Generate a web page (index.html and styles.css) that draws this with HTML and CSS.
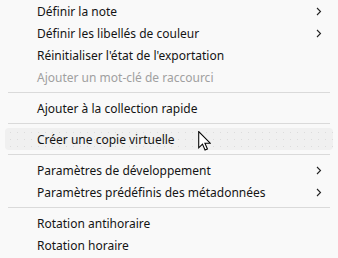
FILE: index.html
```html
<!DOCTYPE html>
<html lang="fr">
<head>
  <meta charset="UTF-8">
  <title>Menu contextuel</title>
  <link rel="stylesheet" href="styles.css">
</head>
<body>
  <div class="menu">
    <div class="item"><span>Définir la note</span><svg class="chev" viewBox="0 0 6 9"><path d="M1 1l3.5 3.5L1 8"/></svg></div>
    <div class="item"><span>Définir les libellés de couleur</span><svg class="chev" viewBox="0 0 6 9"><path d="M1 1l3.5 3.5L1 8"/></svg></div>
    <div class="item"><span>Réinitialiser l'état de l'exportation</span></div>
    <div class="item disabled"><span>Ajouter un mot-clé de raccourci</span></div>
    <div class="sep"></div>
    <div class="item"><span>Ajouter à la collection rapide</span></div>
    <div class="sep"></div>
    <div class="item hover"><span>Créer une copie virtuelle</span>
      <svg class="cursor" viewBox="0 0 12 19"><path d="M0.5 0.5v15.5l3.6-3.5 2.4 5.6 2.3-1-2.4-5.5h5z" fill="#fff" stroke="#000" stroke-width="1"/></svg>
    </div>
    <div class="sep"></div>
    <div class="item"><span>Paramètres de développement</span><svg class="chev" viewBox="0 0 6 9"><path d="M1 1l3.5 3.5L1 8"/></svg></div>
    <div class="item"><span>Paramètres prédéfinis des métadonnées</span><svg class="chev" viewBox="0 0 6 9"><path d="M1 1l3.5 3.5L1 8"/></svg></div>
    <div class="sep"></div>
    <div class="item"><span>Rotation antihoraire</span></div>
    <div class="item"><span>Rotation horaire</span></div>
  </div>
</body>
</html>
```

FILE: styles.css
```css
body {
  margin: 0;
  background: #f9f9f9;
  font-family: "Noto Sans", "Open Sans", sans-serif;
  font-size: 12px;
  color: #141414;
}
.menu {
  display: flex;
  flex-direction: column;
}
.item {
  position: relative;
  height: 22px;
  display: flex;
  align-items: center;
  justify-content: space-between;
  margin: 0 5px;
  padding: 0 11px 0 32px;
  border-radius: 4px;
}
.item.disabled {
  color: #a0a0a0;
}
.item.hover {
  background-color: #f0f0f0;
  background-image: radial-gradient(circle, #dcdcdc 0.6px, transparent 0.9px);
  background-size: 7px 7px;
  background-position: 2px 1px;
}
.chev {
  width: 6px;
  height: 9px;
  fill: none;
  stroke: #222;
  stroke-width: 1.1;
}
.sep {
  height: 1px;
  margin: 4px 8px;
  background: #dadada;
}
.cursor {
  position: absolute;
  left: 193px;
  top: 3px;
  width: 13px;
  height: 20px;
}
```
